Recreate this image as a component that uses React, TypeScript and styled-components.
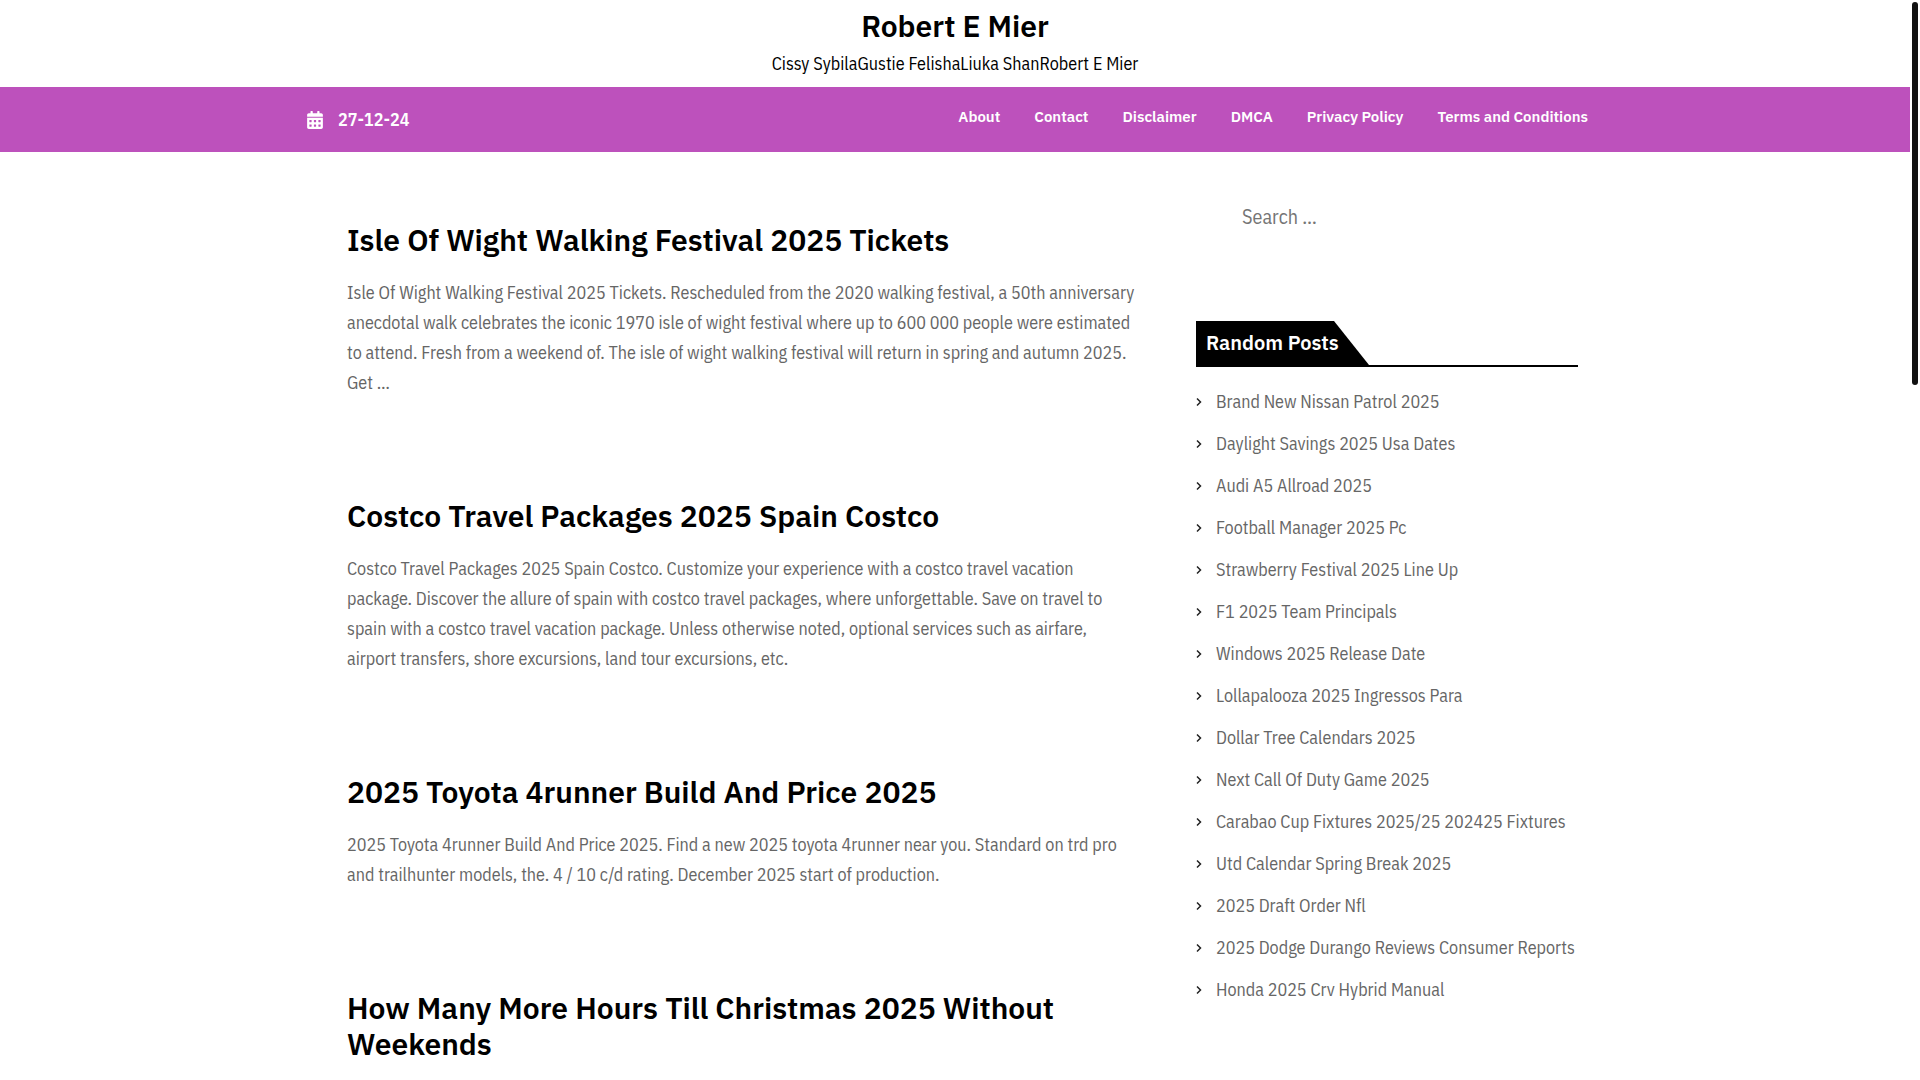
import React from "react";
import styled, { createGlobalStyle } from "styled-components";
import { FaCalendarAlt } from "react-icons/fa";

const sans = `"IBM Plex Sans", Roboto, "Liberation Sans", sans-serif`;
const condensed = `"IBM Plex Sans Condensed", Roboto, "Liberation Sans", sans-serif`;

const GlobalStyle = createGlobalStyle`
  *, *::before, *::after { box-sizing: border-box; }
  html { scrollbar-width: none; }
  body {
    margin: 0;
    background: #fff;
    color: #666;
    font-family: ${condensed};
    font-size: 18px;
    line-height: 30px;
  }
  h1, h2, p, ul { margin: 0; padding: 0; }
  ul { list-style: none; }
  a { color: inherit; text-decoration: none; }
`;

const Page = styled.div`
  height: 100vh;
  overflow: hidden;
  padding-right: 10px;
`;

const ScrollThumb = styled.div`
  position: fixed;
  top: 2px;
  right: 2px;
  width: 6px;
  height: 383px;
  border-radius: 3px;
  background: #111;
`;

const Header = styled.header`
  padding: 8px 0;
  text-align: center;
  color: #000;
`;

const SiteTitle = styled.h1`
  font-family: ${sans};
  font-size: 30px;
  font-weight: 600;
  line-height: 36px;
`;

const Tagline = styled.p`
  padding-top: 5px;
`;

const NavBar = styled.div`
  background: #bd51bc;
  color: #fff;
`;

const NavInner = styled.div`
  display: flex;
  align-items: flex-start;
  justify-content: space-between;
  max-width: 1320px;
  margin: 0 auto;
  padding: 15px 27px 17px 12px;
`;

const DateLabel = styled.div`
  display: flex;
  align-items: center;
  gap: 15px;
  padding-top: 3px;
  font-weight: 600;
`;

const CalendarIcon = styled(FaCalendarAlt)`
  width: 16px;
  height: 18px;
`;

const Menu = styled.ul`
  display: flex;
  gap: 34px;
  font-family: ${sans};
  font-size: 15px;
  font-weight: 600;
`;

const Columns = styled.div`
  display: flex;
  justify-content: space-between;
  max-width: 1320px;
  margin: 0 auto;
  padding: 28px 37px 0 52px;
`;

const Posts = styled.main`
  display: flex;
  flex-direction: column;
  flex: 0 1 790px;
  gap: 100px;
  padding-top: 42px;
`;

const PostTitle = styled.h2`
  margin-bottom: 20px;
  color: #000;
  font-family: ${sans};
  font-size: 30px;
  font-weight: 600;
  line-height: 36px;
`;

const Sidebar = styled.aside`
  flex: 0 0 382px;
`;

const SearchInput = styled.input`
  display: block;
  width: 100%;
  height: 72px;
  padding: 0 46px;
  border: 0;
  outline: 0;
  background: transparent;
  color: #666;
  font: inherit;
  font-size: 20px;
  &::placeholder { color: #757575; }
`;

const WidgetTitle = styled.h2`
  display: flex;
  margin: 69px 0 20px;
  border-bottom: 2px solid #000;
  color: #fff;
  font-family: ${sans};
  font-size: 20px;
  font-weight: 600;
  line-height: 44px;
`;

const WidgetLabel = styled.span`
  width: 173px;
  padding-left: 10px;
  background: #000;
  clip-path: polygon(0 0, 138px 0, 100% 100%, 0 100%);
`;

const RandomList = styled.ul`
  display: flex;
  flex-direction: column;
  gap: 12px;
`;

const RandomItem = styled.li`
  display: flex;
  align-items: center;
  gap: 14px;
  white-space: nowrap;
`;

const menu = ["About", "Contact", "Disclaimer", "DMCA", "Privacy Policy", "Terms and Conditions"];

const posts = [
  {
    title: "Isle Of Wight Walking Festival 2025 Tickets",
    text: "Isle Of Wight Walking Festival 2025 Tickets. Rescheduled from the 2020 walking festival, a 50th anniversary anecdotal walk celebrates the iconic 1970 isle of wight festival where up to 600 000 people were estimated to attend. Fresh from a weekend of. The isle of wight walking festival will return in spring and autumn 2025. Get …",
  },
  {
    title: "Costco Travel Packages 2025 Spain Costco",
    text: "Costco Travel Packages 2025 Spain Costco. Customize your experience with a costco travel vacation package. Discover the allure of spain with costco travel packages, where unforgettable. Save on travel to spain with a costco travel vacation package. Unless otherwise noted, optional services such as airfare, airport transfers, shore excursions, land tour excursions, etc.",
  },
  {
    title: "2025 Toyota 4runner Build And Price 2025",
    text: "2025 Toyota 4runner Build And Price 2025. Find a new 2025 toyota 4runner near you. Standard on trd pro and trailhunter models, the. 4 / 10 c/d rating. December 2025 start of production.",
  },
  { title: "How Many More Hours Till Christmas 2025 Without Weekends", text: "" },
];

const randomPosts = [
  "Brand New Nissan Patrol 2025",
  "Daylight Savings 2025 Usa Dates",
  "Audi A5 Allroad 2025",
  "Football Manager 2025 Pc",
  "Strawberry Festival 2025 Line Up",
  "F1 2025 Team Principals",
  "Windows 2025 Release Date",
  "Lollapalooza 2025 Ingressos Para",
  "Dollar Tree Calendars 2025",
  "Next Call Of Duty Game 2025",
  "Carabao Cup Fixtures 2025/25 202425 Fixtures",
  "Utd Calendar Spring Break 2025",
  "2025 Draft Order Nfl",
  "2025 Dodge Durango Reviews Consumer Reports",
  "Honda 2025 Crv Hybrid Manual",
];

const Chevron = () => (
  <svg width="6" height="10" viewBox="0 0 6 10" fill="none" stroke="#222" strokeWidth="1.5" aria-hidden="true">
    <path d="M1 1.5 4.5 5 1 8.5" />
  </svg>
);

export default function App() {
  return (
    <Page>
      <GlobalStyle />
      <Header>
        <SiteTitle><a href="#home">Robert E Mier</a></SiteTitle>
        <Tagline>Cissy SybilaGustie FelishaLiuka ShanRobert E Mier</Tagline>
      </Header>
      <NavBar>
        <NavInner>
          <DateLabel>
            <CalendarIcon aria-hidden="true" />
            <span>27-12-24</span>
          </DateLabel>
          <nav>
            <Menu>
              {menu.map((item) => (
                <li key={item}><a href="#page">{item}</a></li>
              ))}
            </Menu>
          </nav>
        </NavInner>
      </NavBar>
      <Columns>
        <Posts>
          {posts.map((post) => (
            <article key={post.title}>
              <PostTitle><a href="#post">{post.title}</a></PostTitle>
              {post.text && <p>{post.text}</p>}
            </article>
          ))}
        </Posts>
        <Sidebar>
          <form role="search">
            <SearchInput type="search" aria-label="Search for:" placeholder="Search …" />
          </form>
          <WidgetTitle><WidgetLabel>Random Posts</WidgetLabel></WidgetTitle>
          <RandomList>
            {randomPosts.map((title) => (
              <RandomItem key={title}>
                <Chevron />
                <a href="#post">{title}</a>
              </RandomItem>
            ))}
          </RandomList>
        </Sidebar>
      </Columns>
      <ScrollThumb />
    </Page>
  );
}
